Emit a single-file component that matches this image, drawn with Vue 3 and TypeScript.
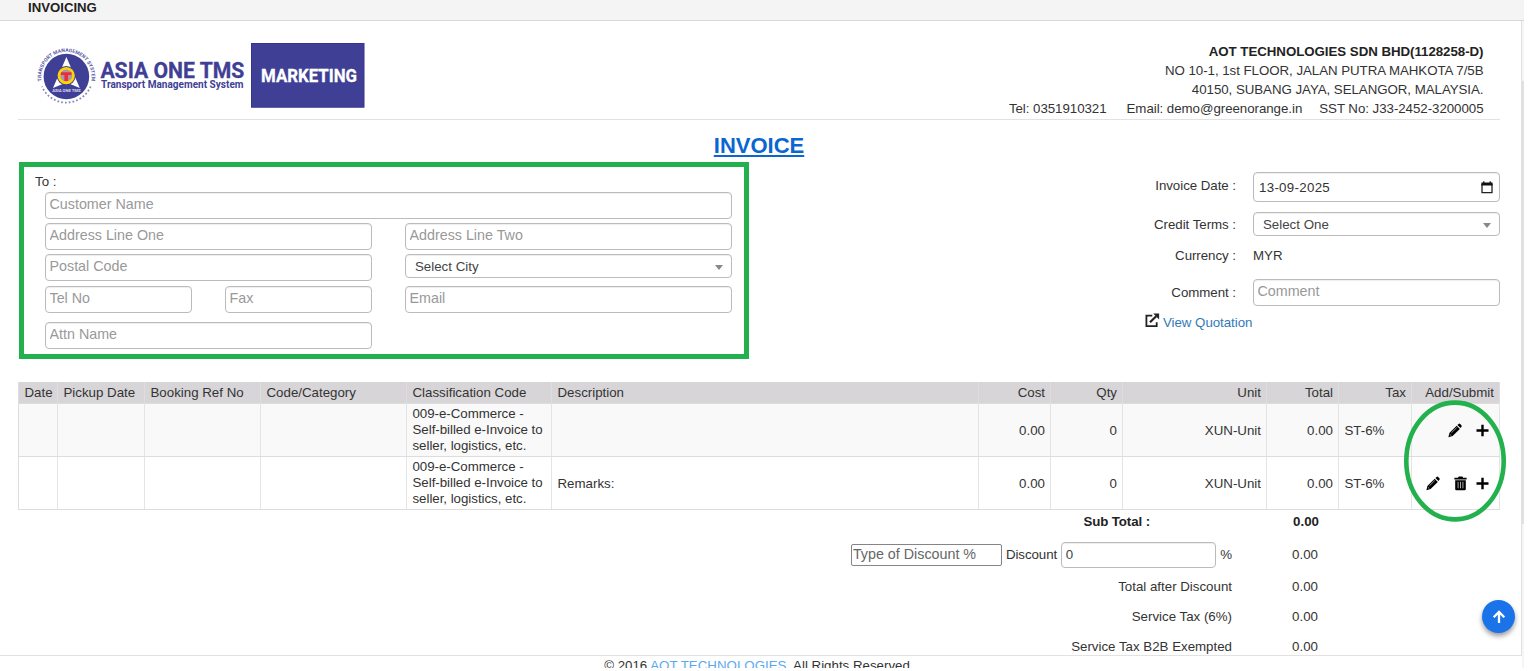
<script setup lang="ts">
import { ref } from 'vue'

interface Line {
  remarks: string
  removable: boolean
}

const company = {
  name: 'AOT TECHNOLOGIES SDN BHD(1128258-D)',
  street: 'NO 10-1, 1st FLOOR, JALAN PUTRA MAHKOTA 7/5B',
  city: '40150, SUBANG JAYA, SELANGOR, MALAYSIA.',
}
const columns: string[] = [
  'Date', 'Pickup Date', 'Booking Ref No', 'Code/Category', 'Classification Code', 'Description',
  'Cost', 'Qty', 'Unit', 'Total', 'Tax', 'Add/Submit',
]
const lines: Line[] = [
  { remarks: '', removable: false },
  { remarks: 'Remarks:', removable: true },
]
const classification = ['009-e-Commerce -', 'Self-billed e-Invoice to', 'seller, logistics, etc.']
const discount = ref('0')
const discountType = ref('')
</script>

<template>
  <div class="page">
    <header class="titlebar">INVOICING</header>

    <main class="content">
      <section class="letterhead">
        <svg class="logo" width="330" height="68" viewBox="36 42 330 68">
          <defs>
            <path id="ring" d="M41.6 81.2 A25.2 25.2 0 1 1 91.1 82.4" />
          </defs>
          <path d="M90.6 86.5 A26.4 26.4 0 0 1 42 86.5" fill="none" stroke="#8484bf" stroke-width="1.8" stroke-dasharray="1.7 2.1" />
          <text class="ringtext"><textPath href="#ring" textLength="87" lengthAdjust="spacing">TRANSPORT MANAGEMENT SYSTEM</textPath></text>
          <circle cx="66.4" cy="76.5" r="22.8" fill="#3f4095" />
          <path d="M66.4 57 L79.8 88 L66.4 82.5 L53 88 Z" fill="#fff" />
          <circle cx="66.2" cy="75.6" r="9.6" fill="#3f4095" />
          <circle cx="66.2" cy="75.6" r="7.3" fill="#a898a8" stroke="#ffd500" stroke-width="2.6" />
          <path d="M60.9 72.3 H71.5 V75.1 H68 V81 H64.4 V75.1 H60.9 Z" fill="#ee2b3b" />
          <text class="badge" x="52.2" y="92.2" textLength="28.4">ASIA ONE TMS</text>
          <text class="brand" x="100.4" y="78.4" textLength="144" lengthAdjust="spacingAndGlyphs">ASIA ONE TMS</text>
          <text class="tagline" x="101" y="88.2" textLength="142.5" lengthAdjust="spacingAndGlyphs">Transport Management System</text>
          <rect x="251.5" y="43.5" width="112.5" height="63.7" fill="#3f4095" stroke="#33348c" />
          <text class="marketing" x="261" y="82.3" textLength="96" lengthAdjust="spacingAndGlyphs">MARKETING</text>
        </svg>
        <div class="company">
          <strong>{{ company.name }}</strong>
          <span>{{ company.street }}</span>
          <span>{{ company.city }}</span>
          <div class="contacts">
            <span>Tel: 0351910321</span>
            <span class="email">Email: demo@greenorange.in</span>
            <span>SST No: J33-2452-3200005</span>
          </div>
        </div>
      </section>

      <h1 class="heading">INVOICE</h1>

      <section class="details">
        <div class="customer">
          <div class="to">To :</div>
          <div class="fields">
            <input class="field wide" placeholder="Customer Name" />
            <input class="field half" placeholder="Address Line One" />
            <input class="field" placeholder="Address Line Two" />
            <input class="field half" placeholder="Postal Code" />
            <div class="select"><span>Select City</span><i class="caret"></i></div>
            <input class="field" placeholder="Tel No" />
            <input class="field" placeholder="Fax" />
            <input class="field" placeholder="Email" />
            <input class="field half" placeholder="Attn Name" />
          </div>
        </div>

        <div class="info">
          <div class="row date">
            <label>Invoice Date :</label>
            <div class="datebox">
              <span>13-09-2025</span>
              <svg width="12" height="13" viewBox="0 0 12 13"><path d="M1 3V11.6H11V3" fill="none" stroke="#222" stroke-width="1.3" /><path d="M.4 1.5H2.2V.3H3.4V1.5H8.6V.3H9.8V1.5H11.6V4.5H.4Z" fill="#111" /></svg>
            </div>
          </div>
          <div class="row terms">
            <label>Credit Terms :</label>
            <div class="select"><span>Select One</span><i class="caret"></i></div>
          </div>
          <div class="row currency"><label>Currency :</label><span>MYR</span></div>
          <div class="row comment"><label>Comment :</label><input class="field" placeholder="Comment" /></div>
          <a class="quotation">
            <svg width="15" height="15" viewBox="0 0 15 15"><path d="M7.3 2.7H1.4V13.2H11.7V9.2" fill="none" stroke="#222" stroke-width="1.8" /><path d="M5 9.3 L11.2 3.2" fill="none" stroke="#222" stroke-width="2.2" /><path d="M8.2 .5H14.1V6.4Z" fill="#222" /></svg>
            <span>View Quotation</span>
          </a>
        </div>
      </section>

      <section class="items">
        <div class="tr head"><div v-for="c in columns" :key="c" class="cell">{{ c }}</div></div>
        <div v-for="(line, i) in lines" :key="i" class="tr body">
          <div v-for="n in 4" :key="n" class="cell"></div>
          <div class="cell code"><span v-for="t in classification" :key="t">{{ t }}</span></div>
          <div class="cell">{{ line.remarks }}</div>
          <div class="cell">0.00</div>
          <div class="cell">0</div>
          <div class="cell">XUN-Unit</div>
          <div class="cell">0.00</div>
          <div class="cell tax">ST-6%</div>
          <div class="cell actions">
            <svg class="pencil" :class="{ spaced: line.removable }" width="14" height="15" viewBox="0 0 14 15"><path d="M.4 14.2 L1.4 10 L8.7 2.8 L11.8 5.9 L4.6 13.1Z" fill="#000" /><path d="M9.4 2 L10.6.9Q11.4.2 12.2 1L13.4 2.2Q14.1 3 13.3 3.9L12.5 5.1Z" fill="#000" /><path d="M3.4 9.8 L8.8 4.5 M1.9 11.3 L3.4 12.7" stroke="#b8b8b8" stroke-width=".8" /></svg>
            <svg v-if="line.removable" class="trash" width="13" height="15" viewBox="0 0 13 15"><path d="M.4 1.8H4L4.7.6H8.4L9.1 1.8H12.6V3.5H.4Z M1.2 4.3H11.8V13Q11.8 14.2 10.6 14.2H2.4Q1.2 14.2 1.2 13Z" fill="#000" /><path d="M4.1 5.8V12.3 M6.5 5.8V12.3 M8.9 5.8V12.3" stroke="#aaa" stroke-width="1" /></svg>
            <svg class="plus" width="13" height="13" viewBox="0 0 13 13"><path d="M6.5.7V12.3M.5 6.5H12.5" stroke="#000" stroke-width="2.4" /></svg>
          </div>
        </div>
      </section>

      <section class="totals">
        <div class="sum sub"><strong>Sub Total :</strong><strong>0.00</strong></div>
        <div class="sum disc">
          <div class="entry">
            <input v-model="discountType" class="dtype" placeholder="Type of Discount %" />
            <span>Discount</span>
            <input v-model="discount" class="field amount" />
            <span>%</span>
          </div>
          <span>0.00</span>
        </div>
        <div class="sum after"><span>Total after Discount</span><span>0.00</span></div>
        <div class="sum service"><span>Service Tax (6%)</span><span>0.00</span></div>
        <div class="sum exempt"><span>Service Tax B2B Exempted</span><span>0.00</span></div>
      </section>
    </main>

    <footer class="footer">© 2016 <a>AOT TECHNOLOGIES.</a> All Rights Reserved</footer>

    <svg class="highlight" width="104" height="122" viewBox="0 0 104 122"><ellipse cx="52" cy="61" rx="48.7" ry="58.4" fill="none" stroke="#22b14c" stroke-width="4.6" /></svg>
    <button class="top" aria-label="Back to top">
      <svg width="14" height="14" viewBox="0 0 14 14"><path d="M7 13V2.2M1.7 7.2L7 1.9L12.3 7.2" fill="none" stroke="#fff" stroke-width="2.3" /></svg>
    </button>
    <div class="scroll"><div class="thumb"></div></div>
  </div>
</template>

<style>
body { background: #fff; overflow: hidden; }
</style>

<style scoped>
* { box-sizing: border-box; }
.page { position: relative; width: 1524px; height: 668px; overflow: hidden; background: #fff; color: #333; font: 13.3px/19px "Liberation Sans", Arial, sans-serif; }
.titlebar { height: 21px; padding-left: 28px; background: #f4f4f4; border-bottom: 1px solid #d8d8d8; font-weight: 700; font-size: 13.2px; line-height: 15px; color: #222; }
.content { width: 1522px; height: 635px; padding-left: 18px; border-right: 1px solid #e2e2e2; border-bottom: 1px solid #e2e2e2; overflow: hidden; }
.letterhead { width: 1482px; height: 99px; border-bottom: 1px solid #e2e2e2; display: flex; justify-content: space-between; padding: 21px 16.5px 0 18px; }
.logo { display: block; }
.ringtext { font: 700 5px Roboto, sans-serif; fill: #5758a4; }
.badge { font: 700 4.3px Roboto, sans-serif; fill: #d9d9ee; }
.brand { font: 700 22.2px Roboto, sans-serif; fill: #3f4095; stroke: #3f4095; stroke-width: .3px; }
.tagline { font: 700 10.6px Roboto, sans-serif; fill: #3f4095; }
.marketing { font: 700 18px Roboto, sans-serif; fill: #fff; stroke: #fff; stroke-width: .3px; }
.company { display: flex; flex-direction: column; align-items: flex-end; letter-spacing: -.045px; }
.company strong { color: #222; }
.contacts { display: flex; }
.email { margin: 0 17px 0 20px; }
.heading { margin: 0; padding-top: 10px; width: 1482px; height: 42px; text-align: center; font-size: 22px; line-height: 32px; color: #0a66d0; text-decoration: underline; text-decoration-thickness: 2px; text-underline-offset: 2px; }
.details { display: flex; justify-content: space-between; width: 1482px; height: 197px; padding-left: 1px; }
.customer { width: 730px; height: 197px; border: 5px solid #22b14c; padding: 5px 0 0 21px; }
.to { margin-left: -10px; height: 20px; }
.fields { display: grid; grid-template-columns: 147px 147px 327px; column-gap: 33px; grid-template-rows: 31px 31px 31.5px 36.5px 27px; }
.wide { grid-column: 1 / 4; }
.half { grid-column: 1 / 3; }
.field { width: 100%; height: 27px; padding: 0 4px 3px 3.5px; border: 1px solid #bbb; border-radius: 4px; background: #fff; font: 14.3px "Liberation Sans", Arial, sans-serif; color: #444; outline: 0; box-shadow: inset 0 1px 1px #eee; }
.field::placeholder { color: #999; opacity: 1; }
.select { height: 24px; border: 1px solid #bbb; border-radius: 4px; display: flex; align-items: center; justify-content: space-between; padding: 1px 8px 0 9px; color: #444; box-shadow: inset 0 1px 1px #eee; }
.caret { border: 4px solid transparent; border-top: 5px solid #888; border-bottom: 0; margin-top: 1px; }
.info { width: 355px; padding-top: 10px; }
.row { display: grid; grid-template-columns: 91px 247px; column-gap: 17px; align-items: center; }
.row label { text-align: right; white-space: nowrap; letter-spacing: -.04px; }
.date { height: 30px; }
.date label { margin-top: -3px; }
.datebox { height: 30px; border: 1px solid #bbb; border-radius: 4px; display: flex; justify-content: space-between; align-items: center; padding: 0 6px 0 5px; box-shadow: inset 0 1px 1px #eee; }
.datebox span { letter-spacing: .3px; }
.terms { margin-top: 9px; height: 26px; }
.currency { height: 37px; }
.comment { margin-top: 5px; height: 27px; }
.comment label { margin-top: -1px; }
.quotation { display: flex; align-items: center; gap: 3px; margin-top: 6px; height: 20px; color: #337ab7; letter-spacing: -.04px; }
.quotation svg { margin: -4px 0 0 0; }
.items { width: 1482px; margin-top: 23px; border-left: 1px solid #ddd; }
.tr { display: grid; grid-template-columns: 39px 87px 116px 146px 145px 427px 72px 72px 144px 72px 73px 88px; }
.cell { display: flex; align-items: center; padding: 0 5px 0 5.5px; border-right: 1px solid #e4e4e4; white-space: nowrap; }
.cell:nth-child(n + 7) { justify-content: flex-end; }
.head { height: 22px; background: #d7d5d7; border-bottom: 1px solid #ddd; }
.head .cell { border-right-color: #dedede; }
.body { height: 53px; border-bottom: 1px solid #ddd; }
.body:nth-child(2) { background: #f9f9f9; }
.cell.code { flex-direction: column; align-items: flex-start; justify-content: center; line-height: 16px; letter-spacing: -.03px; }
.body .cell.tax { justify-content: flex-start; }
.cell.actions { padding-right: 10px; }
.plus { margin-left: 14px; }
.spaced { margin-right: 14px; }
.trash + .plus { margin-left: 9px; }
.sum { display: grid; grid-template-columns: 1214px 86px; align-items: center; }
.sum > * { text-align: right; }
.sum strong { color: #222; }
.sub { height: 23px; }
.sub strong:first-child { padding-right: 82px; letter-spacing: -.1px; }
.sub strong:last-child { margin-right: -1px; }
.disc { height: 43px; }
.entry { display: flex; justify-content: flex-end; align-items: center; gap: 4px; letter-spacing: -.05px; }
.dtype { width: 151px; height: 22px; border: 1px solid #858585; border-radius: 2px; padding: 0 1px 1px; font: 14.3px "Liberation Sans", Arial, sans-serif; }
.dtype::placeholder { color: #666; opacity: 1; }
.amount { width: 155px; height: 26px; padding-bottom: 0; font-size: 13.3px; }
.after { height: 21px; }
.service { height: 39px; }
.exempt { height: 21px; }
.footer { padding-top: 2px; padding-right: 10px; line-height: 16px; text-align: center; white-space: nowrap; }
.footer a { color: #5aa9f0; }
.highlight { position: absolute; left: 1403px; top: 400px; }
.top { position: absolute; left: 1482px; top: 600px; width: 33px; height: 33px; border: 0; padding: 0; border-radius: 50%; background: #1a73e8; box-shadow: 0 3px 5px rgba(0, 0, 0, .4); display: flex; align-items: center; justify-content: center; }
.scroll { position: absolute; right: 0; top: 21px; width: 2px; height: 647px; background: #f5f5f5; }
.thumb { margin-top: 60px; height: 443px; background: #e1e1e1; }
</style>
